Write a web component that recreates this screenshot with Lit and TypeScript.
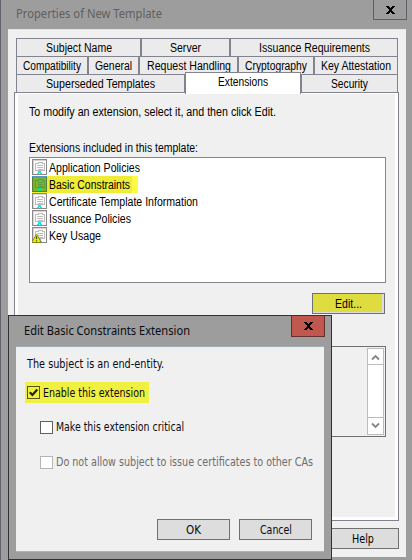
import { LitElement, html, css, svg, nothing } from "lit";
import { customElement, property, state } from "lit/decorators.js";
import { styleMap } from "lit/directives/style-map.js";

/** A single line of text condensed or stretched to a given width. */
@customElement("ui-label")
class UiLabel extends LitElement {
  @property() text = "";
  @property({ type: Number }) width = 0;
  @state() private scale = 1;

  static styles = css`
    :host { display: inline-block; height: 16px; line-height: 16px; flex: none; white-space: nowrap; }
    .box { height: 16px; }
    .txt { display: inline-block; transform-origin: 0 50%; }
  `;

  firstUpdated() {
    const el = this.renderRoot.querySelector(".txt") as HTMLElement;
    const natural = el.getBoundingClientRect().width;
    if (natural && this.width) this.scale = this.width / natural;
  }

  render() {
    return html`<div class="box" style=${styleMap({ width: this.width + "px" })}><span class="txt" style=${styleMap({ transform: `scaleX(${this.scale})` })}>${this.text}</span></div>`;
  }
}

interface Tab { name: string; tab: number; text: number; active?: boolean; }

const TABS: Tab[][] = [
  [
    { name: "Subject Name", tab: 125, text: 66 },
    { name: "Server", tab: 89, text: 31 },
    { name: "Issuance Requirements", tab: 168, text: 111 },
  ],
  [
    { name: "Compatibility", tab: 72, text: 58 },
    { name: "General", tab: 51, text: 37 },
    { name: "Request Handling", tab: 99, text: 84 },
    { name: "Cryptography", tab: 76, text: 62 },
    { name: "Key Attestation", tab: 84, text: 70 },
  ],
  [
    { name: "Superseded Templates", tab: 169, text: 109 },
    { name: "Extensions", tab: 116, text: 50, active: true },
    { name: "Security", tab: 97, text: 37 },
  ],
];

const ITEMS = [
  { name: "Application Policies", w: 91 },
  { name: "Basic Constraints", w: 81, marked: true },
  { name: "Certificate Template Information", w: 149 },
  { name: "Issuance Policies", w: 82 },
  { name: "Key Usage", w: 52, warn: true },
];

@customElement("app-root")
class AppRoot extends LitElement {
  static styles = css`
    :host { display: block; width: 412px; height: 560px; overflow: hidden; position: relative; }
    * { box-sizing: border-box; }
    .window { width: 412px; height: 560px; background: #9d9d9d; border-left: 1px solid #62626c; display: flex; flex-direction: column; padding: 0 6px 3px 7px;
      font-family: "Liberation Sans", Arial, sans-serif; font-size: 12px; color: #000; }
    .title { height: 29px; flex: none; display: flex; justify-content: space-between; padding: 6px 0 0 8px; color: #5f5f5f; }
    .title, .dtitle { font-family: "Noto Sans", "Open Sans", sans-serif; }
    .title ui-label, .dtitle ui-label { font-size: 12.5px; }
    .close { width: 34px; height: 21px; border: 1px solid #5f5f68; display: flex; align-items: center; justify-content: center; flex: none; }
    .window > .title .close { margin: -7px -1px 0 0; }
    .client { flex: 1; background: #f0f0f0; border-top: 1px solid #e6e6e8; padding: 8px 7px 8px 6px; display: flex; flex-direction: column; }
    .row { display: flex; padding: 0 1px 0 2px; height: 18px; flex: none; }
    .tab { border: 1px solid #83838f; border-bottom: 0; background: #ebebeb; height: 18px; display: flex; justify-content: center; padding-top: 1px; flex: none; }
    .tab.active { height: 22px; margin-top: -2px; background: #fff; position: relative; z-index: 1; }
    .panel { height: 429px; flex: none; border: 1px solid #83838f; background: #f0f0f0; padding: 11px 9px 0 12px; display: flex; flex-direction: column;
      box-shadow: inset 3px 0 #fff, inset -3px 0 #fff, inset 0 -3px #fff, inset 0 1px #fff; }
    .intro { height: 36px; padding-left: 2px; }
    .caption { height: 17px; padding-left: 2px; }
    .list { margin-left: 2px; width: 357px; height: 126px; border: 1px solid #828790; background: #fff; padding: 1px 2px; }
    .item { height: 17px; display: flex; padding-top: 1px; gap: 2px; width: 106px; }
    .item svg { flex: none; margin-top: -1px; }
    .item.marked { background: linear-gradient(90deg, #efec38 100px, #fffb45 100px); }
    .btn { width: 73px; height: 21px; border: 1px solid #707070; background: #ddd; display: flex; justify-content: center; padding-top: 2px; }
    .edit { margin: 10px 0 0 285px; background: #dedc3e; box-shadow: inset -2px 0 #dcdce2, inset 0 -1px #dcdce2; }
    .desc { margin: 32px 0 0 2px; width: 357px; height: 91px; border: 1px solid #707070; padding: 1px; display: flex; justify-content: flex-end; }
    .scroll { width: 17px; border: 1px solid #bcbcbc; background: #fff; display: flex; flex-direction: column; justify-content: space-between; }
    .up { border-bottom: 1px solid #bcbcbc; height: 16px; }
    .down { border-top: 1px solid #bcbcbc; height: 17px; }
    .up svg, .down svg { display: block; }
    .footer { display: flex; justify-content: flex-end; padding-top: 7px; }
    .help, .body { font-family: "DejaVu Sans Condensed", "DejaVu Sans", sans-serif; font-stretch: condensed; font-size: 11.5px; }

    .dialog { position: absolute; left: 8px; top: 315px; width: 324px; height: 245px; background: #9d9d9d; border: 1px solid #303234; display: flex; flex-direction: column; padding: 0 7px 7px; color: #0a0a12; }
    .dtitle { height: 30px; flex: none; display: flex; justify-content: space-between; padding: 7px 0 0 8px; }
    .dtitle .close { background: #c1584f; border-color: #62302d; border-top: 0; margin: -7px -1px 0 0; }
    .body { flex: 1; background: #f0f0f0; border-top: 1px solid #a3adb6; border-bottom: 1px solid #a9b4c0; padding: 9px 12px 11px 9px; display: flex; flex-direction: column; }
    .subject { padding-left: 2px; height: 26px; }
    .check { display: flex; align-items: center; gap: 3px; }
    .enable { width: 124px; height: 21px; background: #f0f040; padding-left: 2px; }
    .critical { margin: 16px 0 0 15px; height: 16px; }
    .cas { margin: 19px 0 0 15px; height: 16px; color: #6e6e6e; }
    .cb { width: 13px; height: 13px; border: 1px solid #606060; background: #fff; flex: none; }
    .enable .cb { background: #f0f040; border-color: #55551a; }
    .cas .cb { border-color: #b4b4b4; }
    .cb svg { display: block; }
    .actions { margin-top: auto; display: flex; justify-content: flex-end; gap: 9px; }
    .actions .btn { margin-right: 0; }
    .ok { border-color: #3c7fb1; }
  `;

  private cross = html`<svg width="9" height="8" viewBox="0 0 9 8" shape-rendering="crispEdges">
    <path d="M0 0h3v1h1v1h1v-1h1v-1h3v1h-1v1h-1v1h-1v2h1v1h1v1h1v1h-3v-1h-1v-1h-1v1h-1v1h-3v-1h1v-1h1v-1h1v-2h-1v-1h-1v-1h-1z" fill="#000"/></svg>`;

  private icon(marked?: boolean, warn?: boolean) {
    const paper = marked ? "#7db52f" : "#fcfcfc";
    const line = marked ? "#5d9c3c" : "#bcbcbc";
    const edge = marked ? "#567f3a" : "#8a8a8a";
    const seal = marked ? "#15df78" : "#22e0ea";
    return html`<svg width="15" height="16" viewBox="0 0 15 16" shape-rendering="crispEdges">
      <rect x="0.5" y="0.5" width="14" height="15" fill=${paper} stroke=${edge}/>
      <path d="M1.5 14.5V1.5H13.5" stroke=${marked ? "#6fa838" : "#d6d6d6"} fill="none"/>
      ${marked ? svg`<path d="M0 .5h15" stroke="#5599c8"/>` : nothing}
      <path d="M3.5 11.5V4.5H6.500V3.500H10.500V4.500H12.500V11.500Z" stroke=${line} fill="none"/>
      <path d="M6 6.500h5M6 8.500h5M6 10.500h5" stroke=${line}/>
      <path d="M4.500 6.500h1M4.500 8.500h1" stroke=${seal} stroke-opacity=".6"/>
      <path d="M6 12h3v2h1v1H8v-1H7v1H5v-1h1z" fill=${seal}/>
      ${warn ? svg`<g shape-rendering="auto"><path d="M4.5 7L9.300 15.500H-.3z" fill="#f5ef00" stroke="#77760c" stroke-width=".8"/><path d="M4.500 9.300v3M4.500 13.300v1.200" stroke="#55550a" stroke-width="1.300"/></g>` : nothing}
    </svg>`;
  }

  render() {
    return html`
      <div class="window">
        <div class="title"><ui-label text="Properties of New Template" width="146"></ui-label><div class="close">${this.cross}</div></div>
        <div class="client">
          ${TABS.map((row) => html`<div class="row">${row.map((t) => html`<div class="tab ${t.active ? "active" : ""}" style=${styleMap({ width: t.tab + "px" })}><ui-label .text=${t.name} .width=${t.text}></ui-label></div>`)}</div>`)}
          <div class="panel">
            <div class="intro"><ui-label text="To modify an extension, select it, and then click Edit." width="247"></ui-label></div>
            <div class="caption"><ui-label text="Extensions included in this template:" width="169"></ui-label></div>
            <div class="list">
              ${ITEMS.map((i) => html`<div class="item ${i.marked ? "marked" : ""}">${this.icon(i.marked, i.warn)}<ui-label .text=${i.name} .width=${i.w}></ui-label></div>`)}
            </div>
            <div class="btn edit"><ui-label text="Edit..." width="27"></ui-label></div>
            <div class="desc"><div class="scroll">
              <div class="up"><svg width="15" height="15"><path d="M4 10.5L7.5 7l3.500 3.500" fill="none" stroke="#858585" stroke-width="1.8"/></svg></div>
              <div class="down"><svg width="15" height="15"><path d="M4 5.500L7.500 9l3.500-3.500" fill="none" stroke="#858585" stroke-width="1.8"/></svg></div>
            </div></div>
          </div>
          <div class="footer"><div class="btn help"><ui-label text="Help" width="22"></ui-label></div></div>
        </div>
      </div>
      <div class="dialog">
        <div class="dtitle"><ui-label text="Edit Basic Constraints Extension" width="166"></ui-label><div class="close">${this.cross}</div></div>
        <div class="body">
          <div class="subject"><ui-label text="The subject is an end-entity." width="137"></ui-label></div>
          <div class="check enable"><div class="cb"><svg width="11" height="11"><path d="M1.800 5.300L4.400 8 9.300 2.600" fill="none" stroke="#222208" stroke-width="2.200"/></svg></div><ui-label text="Enable this extension" width="102"></ui-label></div>
          <div class="check critical"><div class="cb"></div><ui-label text="Make this extension critical" width="128"></ui-label></div>
          <div class="check cas"><div class="cb"></div><ui-label text="Do not allow subject to issue certificates to other CAs" width="257"></ui-label></div>
          <div class="actions"><div class="btn ok"><ui-label text="OK" width="15"></ui-label></div><div class="btn"><ui-label text="Cancel" width="32"></ui-label></div></div>
        </div>
      </div>`;
  }
}
